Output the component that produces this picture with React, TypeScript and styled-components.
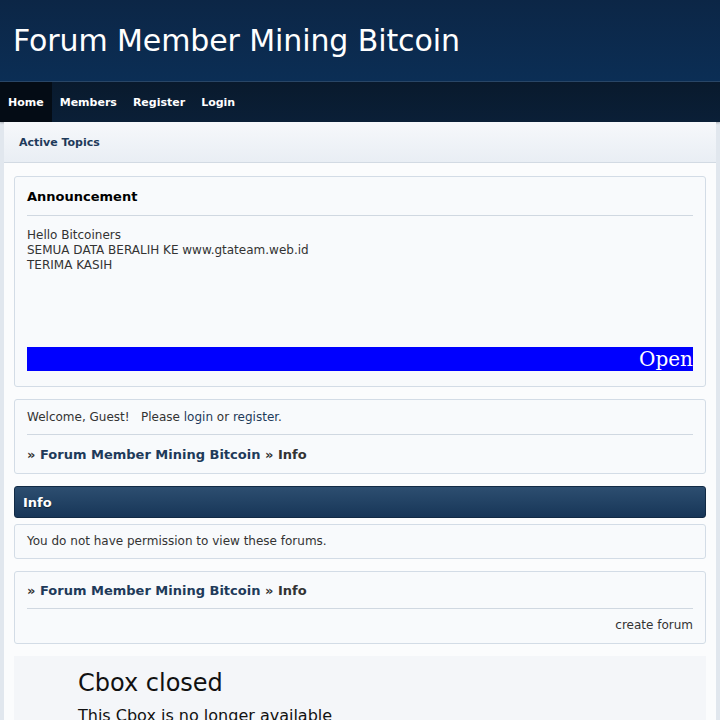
import React from 'react';
import styled, { createGlobalStyle } from 'styled-components';

/*----------- Styles ----------- */
const GlobalStyle = createGlobalStyle`
  html, body {
    margin: 0;
    padding: 0;
    background: #e1e7ee;
    font-family: "DejaVu Sans", Verdana, sans-serif;
    color: #333;
  }
`;

const Header = styled.header`
  height: 81px;
  background: linear-gradient(to bottom, #0c2646, #0b2e55);
  border-bottom: 1px solid #2a4868;
  display: flex;
  align-items: center;
  padding-left: 13px;
`;

const Title = styled.h1`
  margin: 0;
  font-size: 30px;
  font-weight: normal;
  letter-spacing: -0.1px;
  color: #fff;
`;

const Nav = styled.nav`
  height: 40px;
  display: flex;
  background: linear-gradient(to bottom, #091a2d, #0a1f37);
  box-shadow: 0 1px 2px rgba(0, 0, 0, 0.25);
`;

const NavItem = styled.a<{ $active?: boolean }>`
  display: flex;
  align-items: center;
  padding: 0 8px;
  font-size: 11px;
  font-weight: bold;
  color: #fff;
  text-decoration: none;
  background: ${(p) => (p.$active ? '#040c15' : 'transparent')};
`;

const Page = styled.div`
  margin: 0 4px;
  background: #fbfcfd;
  height: 598px;
  overflow: hidden;
`;

const SubBar = styled.div`
  height: 40px;
  display: flex;
  align-items: center;
  padding-left: 15px;
  background: linear-gradient(to bottom, #f6f8fb, #e9eef4);
  border-bottom: 1px solid #d2dae3;
  font-size: 11px;
  font-weight: bold;
  color: #1e3a5a;
`;

const Content = styled.div`
  padding: 13px 10px 0;
  display: flex;
  flex-direction: column;
  gap: 12px;
`;

const Box = styled.div`
  background: #f8fafc;
  border: 1px solid #d3dce6;
  border-radius: 3px;
  padding: 0 12px;
  font-size: 12px;
  color: #333;
`;

const BoxTitle = styled.div`
  font-size: 13px;
  font-weight: bold;
  color: #000;
  padding: 12px 0 11px;
  border-bottom: 1px solid #d0d8e1;
`;

const Message = styled.div`
  padding: 12px 0 0;
  line-height: 15px;
  height: 158px;
  display: flex;
  flex-direction: column;
`;

const Marquee = styled.div`
  margin-top: auto;
  margin-bottom: 15px;
  height: 24px;
  background: #0000ff;
  color: #fff;
  font-family: "DejaVu Serif", serif;
  font-size: 20px;
  line-height: 24px;
  text-align: right;
  overflow: hidden;
  white-space: nowrap;
`;

const Row = styled.div<{ $align?: string; $pad?: string; $border?: boolean }>`
  padding: ${(p) => p.$pad || '10px 0'};
  line-height: 14px;
  text-align: ${(p) => p.$align || 'left'};
  border-bottom: ${(p) => (p.$border ? '1px solid #d0d8e1' : 'none')};
`;

const Link = styled.a`
  color: #1e3a5a;
  text-decoration: none;
`;

const Crumbs = styled.div<{ $pad?: string; $border?: boolean }>`
  padding: ${(p) => p.$pad || '12px 0 11px'};
  line-height: 15px;
  font-size: 13px;
  font-weight: bold;
  color: #333;
  border-bottom: ${(p) => (p.$border ? '1px solid #d0d8e1' : 'none')};

  a {
    color: #1e3a5a;
    text-decoration: none;
  }
`;

const CatHead = styled.div`
  height: 32px;
  display: flex;
  align-items: center;
  padding-left: 8px;
  margin-bottom: -6px;
  border-radius: 3px;
  border: 1px solid #112a45;
  background: linear-gradient(to bottom, #2d4e70, #173658);
  color: #fff;
  font-size: 13px;
  font-weight: bold;
  text-shadow: 0 1px 1px rgba(0, 0, 0, 0.5);
  box-sizing: border-box;
`;

const Cbox = styled.div`
  background: #f4f6f9;
  padding: 12px 64px 0;
  color: #111;
  height: 80px;
`;

const CboxTitle = styled.div`
  font-size: 24px;
  line-height: 30px;
`;

const CboxText = styled.div`
  font-size: 16px;
  line-height: 19px;
  margin-top: 8px;
`;

export default function App() {
  return (
    <>
      <GlobalStyle />
      <Header>
        <Title>Forum Member Mining Bitcoin</Title>
      </Header>
      <Nav>
        <NavItem $active>Home</NavItem>
        <NavItem>Members</NavItem>
        <NavItem>Register</NavItem>
        <NavItem>Login</NavItem>
      </Nav>
      <Page>
        <SubBar>Active Topics</SubBar>
        <Content>
          <Box>
            <BoxTitle>Announcement</BoxTitle>
            <Message>
              <div>Hello Bitcoiners</div>
              <div>SEMUA DATA BERALIH KE www.gtateam.web.id</div>
              <div>TERIMA KASIH</div>
              <Marquee>Open</Marquee>
            </Message>
          </Box>
          <Box>
            <Row $border>
              Welcome, Guest!&nbsp;&nbsp; Please <Link>login</Link> or <Link>register</Link>.
            </Row>
            <Crumbs>
              » <a>Forum Member Mining Bitcoin</a> » Info
            </Crumbs>
          </Box>
          <CatHead>Info</CatHead>
          <Box>
            <Row $pad="9px 0 10px">You do not have permission to view these forums.</Row>
          </Box>
          <Box>
            <Crumbs $pad="11px 0 10px" $border>
              » <a>Forum Member Mining Bitcoin</a> » Info
            </Crumbs>
            <Row $align="right" $pad="9px 0 11px">create forum</Row>
          </Box>
          <Cbox>
            <CboxTitle>Cbox closed</CboxTitle>
            <CboxText>This Cbox is no longer available</CboxText>
          </Cbox>
        </Content>
      </Page>
    </>
  );
}
